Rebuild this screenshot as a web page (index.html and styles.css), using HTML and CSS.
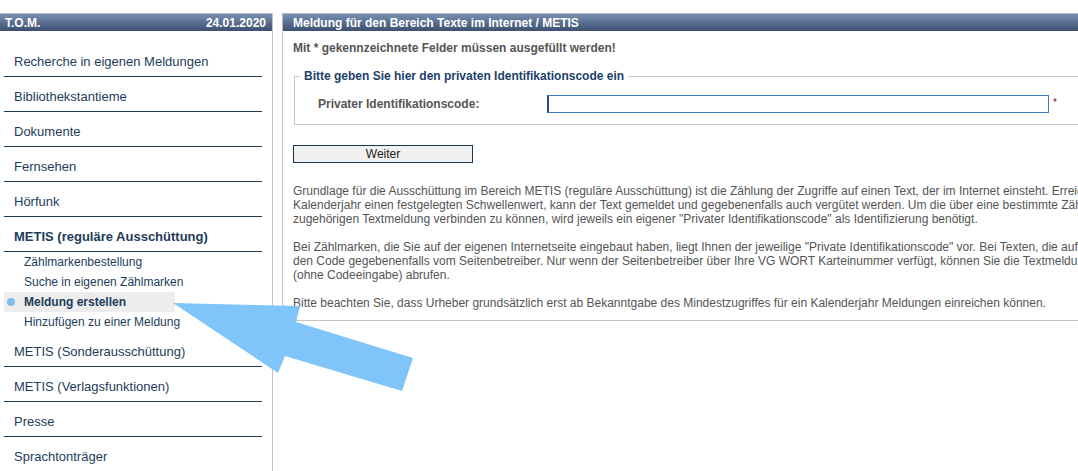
FILE: index.html
```html
<!DOCTYPE html>
<html lang="de">

<head>
    <meta charset="UTF-8">
    <meta name="viewport" content="width=device-width, initial-scale=1.0">
    <title>T.O.M. | METIS</title>
    <link rel="stylesheet" href="styles.css">
</head>

<body>
    <div class="page">
        <aside class="sidebar">
            <div class="bar">
                <span>T.O.M.</span>
                <span>24.01.2020</span>
            </div>
            <ul class="menu">
                <li><a href="#">Recherche in eigenen Meldungen</a></li>
                <li><a href="#">Bibliothekstantieme</a></li>
                <li><a href="#">Dokumente</a></li>
                <li><a href="#">Fernsehen</a></li>
                <li><a href="#">Hörfunk</a></li>
                <li class="open"><a href="#">METIS (reguläre Ausschüttung)</a></li>
                <li class="sub">
                    <ul>
                        <li><a href="#">Zählmarkenbestellung</a></li>
                        <li><a href="#">Suche in eigenen Zählmarken</a></li>
                        <li class="current"><a href="#">Meldung erstellen</a></li>
                        <li><a href="#">Hinzufügen zu einer Meldung</a></li>
                    </ul>
                </li>
                <li><a href="#">METIS (Sonderausschüttung)</a></li>
                <li><a href="#">METIS (Verlagsfunktionen)</a></li>
                <li><a href="#">Presse</a></li>
                <li><a href="#">Sprachtonträger</a></li>
            </ul>
        </aside>

        <main class="panel">
            <div class="bar">
                <span>Meldung für den Bereich Texte im Internet / METIS</span>
            </div>
            <div class="panel-body">
                <p class="notice">Mit * gekennzeichnete Felder müssen ausgefüllt werden!</p>

                <fieldset>
                    <legend>Bitte geben Sie hier den privaten Identifikationscode ein</legend>
                    <div class="field-row">
                        <label for="code">Privater Identifikationscode:</label>
                        <input type="text" id="code">
                        <span class="required">*</span>
                    </div>
                </fieldset>

                <button type="button" class="btn">Weiter</button>

                <p class="info">Grundlage für die Ausschüttung im Bereich METIS (reguläre Ausschüttung) ist die Zählung der Zugriffe auf einen Text, der im Internet einsteht. Erreicht der Text im<br>
                Kalenderjahr einen festgelegten Schwellenwert, kann der Text gemeldet und gegebenenfalls auch vergütet werden. Um die über eine bestimmte Zählmarke erfolgten Zugriffe mit der<br>
                zugehörigen Textmeldung verbinden zu können, wird jeweils ein eigener "Privater Identifikationscode" als Identifizierung benötigt.</p>

                <p class="info">Bei Zählmarken, die Sie auf der eigenen Internetseite eingebaut haben, liegt Ihnen der jeweilige "Private Identifikationscode" vor. Bei Texten, die auf fremden Internetseiten stehen, erhalten Sie<br>
                den Code gegebenenfalls vom Seitenbetreiber. Nur wenn der Seitenbetreiber über Ihre VG WORT Karteinummer verfügt, können Sie die Textmeldung direkt<br>
                (ohne Codeeingabe) abrufen.</p>

                <p class="info">Bitte beachten Sie, dass Urheber grundsätzlich erst ab Bekanntgabe des Mindestzugriffes für ein Kalenderjahr Meldungen einreichen können.</p>
            </div>
        </main>
    </div>

    <!-- Hinweispfeil auf "Meldung erstellen" -->
    <svg class="pointer" width="1078" height="471" viewBox="0 0 1078 471">
        <polygon points="173,303 300,306 296,322 413,358 402,391 285,356 278,373" fill="#80c5fa" />
    </svg>
</body>

</html>
```

FILE: styles.css
```css
html,
body {
    overflow: hidden;
}

body {
    font-family: "Liberation Sans", Arial, sans-serif;
    font-size: 12px;
    color: #555;
    background-color: #fff;
    margin: 0;
    padding: 13px 0 0 0;
    height: 458px;
}

.page {
    display: flex;
    align-items: flex-start;
    width: 1200px;
}

.bar {
    display: flex;
    justify-content: space-between;
    align-items: center;
    box-sizing: border-box;
    height: 18px;
    border-top: 1px solid #b4b8c0;
    background: linear-gradient(#7a90b2, #566b8c 55%, #3e5070);
    color: white;
    font-weight: bold;
    font-size: 12px;
    padding: 0 6px 0 5px;
}

/* Sidebar */

.sidebar {
    width: 272px;
    height: 470px;
    border-right: 1px solid #c4c4c4;
    flex-shrink: 0;
}

.menu {
    list-style: none;
    margin: 0;
    padding: 11px 0 0 0;
}

.menu > li {
    margin: 0 10px 0 4px;
    border-bottom: 1px solid #1b3a58;
}

.menu > li > a {
    display: block;
    padding: 12px 0 6px 10px;
    line-height: 16px;
    font-size: 13px;
    color: #1e3c5c;
    text-decoration: none;
}

.menu > li.open > a {
    font-weight: bold;
}

.menu > li.sub {
    border-bottom: none;
    margin: 0;
}

.menu .sub ul {
    list-style: none;
    margin: 0;
    padding: 0;
}

.menu .sub li {
    margin-left: 4px;
    width: 171px;
    position: relative;
}

.menu .sub li a {
    display: block;
    height: 20px;
    line-height: 20px;
    padding-left: 20px;
    white-space: nowrap;
    font-size: 12px;
    color: #1e3c5c;
    text-decoration: none;
}

.menu .sub li.current {
    background-color: #ededed;
}

.menu .sub li.current a {
    font-weight: bold;
}

.menu .sub li.current::before {
    content: "";
    position: absolute;
    left: 3px;
    top: 6px;
    width: 8px;
    height: 8px;
    border-radius: 50%;
    background-color: #7fbff0;
}

/* Hauptbereich */

.panel {
    margin-left: 9px;
    width: 918px;
    border-left: 1px solid #c4c4c4;
    border-bottom: 1px solid #c4c4c4;
}

.panel .bar {
    padding-left: 10px;
    margin-left: -1px;
    border-left: 1px solid #b4b8c0;
}

.panel-body {
    padding: 10px 0 10px 10px;
}

.notice {
    margin: 0;
    line-height: 14px;
    font-weight: bold;
    color: #555;
}

fieldset {
    margin: 14px 0 0 1px;
    padding: 0 0 11px 5px;
    border: 1px solid #c8c8c8;
    border-right: none;
}

legend {
    padding: 0 4px;
    line-height: 14px;
    font-weight: bold;
    color: #1d3f6c;
}

.field-row {
    display: flex;
    align-items: center;
    margin: 12px 0 0 18px;
}

.field-row label {
    width: 229px;
    font-weight: bold;
    color: #555;
}

.field-row input {
    box-sizing: border-box;
    width: 502px;
    height: 18px;
    margin: 0;
    padding: 0 3px;
    border: 1px solid #3a78c4;
    border-left: 2px solid #1f4f8a;
    font-family: inherit;
    font-size: 12px;
    outline: none;
}

.required {
    margin-left: 4px;
    font-size: 10px;
    color: #7a2030;
    position: relative;
    top: -2px;
}

.btn {
    display: block;
    box-sizing: border-box;
    width: 180px;
    height: 18px;
    margin: 20px 0 0 0;
    padding: 0;
    background-color: #f0f0f0;
    border: 1px solid #1b3352;
    font-family: inherit;
    font-size: 12px;
    color: #222;
}

.info {
    margin: 0 0 14px 0;
    line-height: 14px;
    white-space: nowrap;
    color: #555;
}

.btn + .info {
    margin-top: 21px;
}

.info:last-child {
    margin-bottom: 0;
}

.pointer {
    position: absolute;
    top: 0;
    left: 0;
    pointer-events: none;
}
```
